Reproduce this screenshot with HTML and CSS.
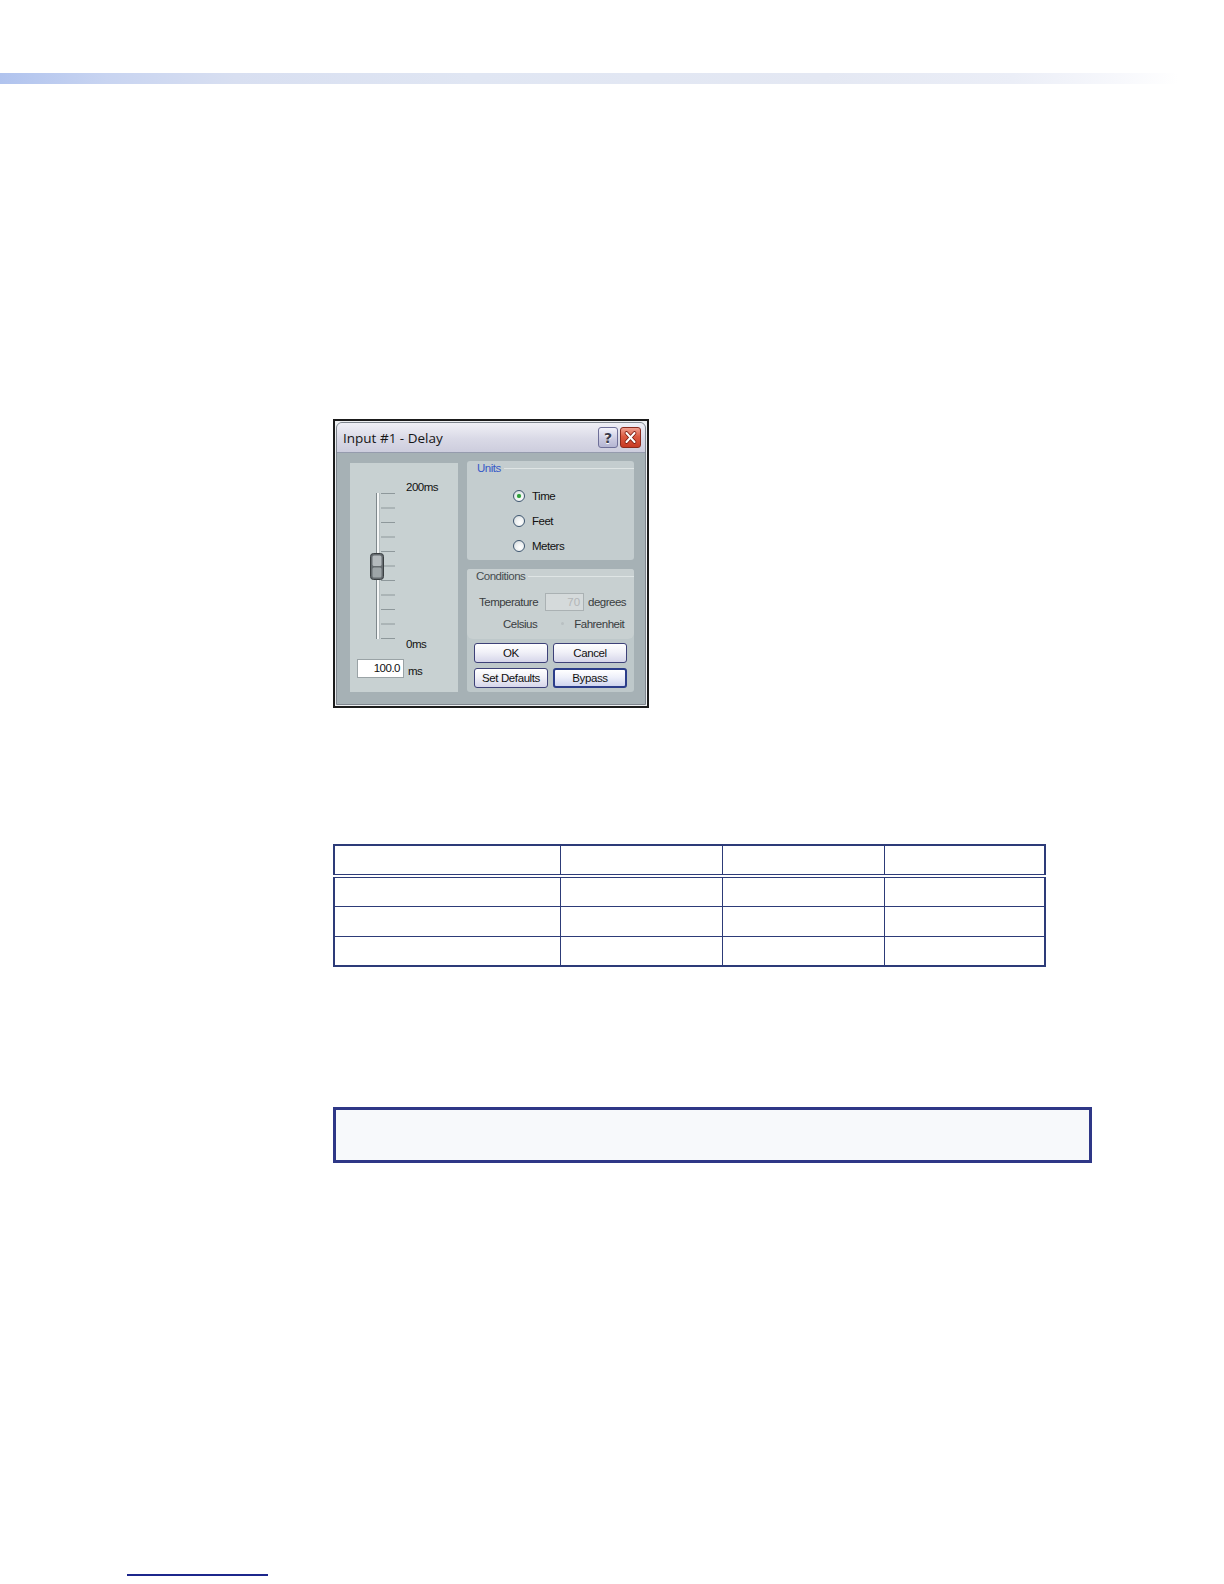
FILE: index.html
```html
<!DOCTYPE html>
<html lang="en">
<head>
<meta charset="utf-8">
<title>Input #1 - Delay</title>
<link rel="stylesheet" href="styles.css">
</head>
<body>
<div class="page">
  <div class="topbar"></div>

  <div class="figure">
    <div class="dialog">
      <div class="win">
        <div class="titlebar">
          <span class="title">Input #1 - Delay</span>
          <div class="tbtns">
            <span class="tb help">?</span>
            <span class="tb close">
              <svg width="21" height="21" viewBox="0 0 21 21" aria-hidden="true">
                <path d="M6 5.5 L15 15.5 M15 5.5 L6 15.5" stroke="#7a1c10" stroke-width="4" stroke-linecap="round"/>
                <path d="M6 5.5 L15 15.5 M15 5.5 L6 15.5" stroke="#ffffff" stroke-width="2.2" stroke-linecap="round"/>
              </svg>
            </span>
          </div>
        </div>

        <div class="body">
          <div class="lpanel">
            <div class="slbl">200ms</div>
            <svg class="slider" width="40" height="148" viewBox="0 0 40 148" aria-hidden="true">
              <g stroke="#8e989b" stroke-width="1">
                <line x1="17" y1="0.5" x2="31" y2="0.5"/>
                <line x1="17" y1="15" x2="31" y2="15"/>
                <line x1="17" y1="29.5" x2="31" y2="29.5"/>
                <line x1="17" y1="44" x2="31" y2="44"/>
                <line x1="17" y1="58.5" x2="31" y2="58.5"/>
                <line x1="17" y1="73" x2="31" y2="73"/>
                <line x1="17" y1="87.5" x2="31" y2="87.5"/>
                <line x1="17" y1="102" x2="31" y2="102"/>
                <line x1="17" y1="116.5" x2="31" y2="116.5"/>
                <line x1="17" y1="131" x2="31" y2="131"/>
                <line x1="17" y1="145.5" x2="31" y2="145.5"/>
              </g>
              <line x1="12.5" y1="0" x2="12.5" y2="146" stroke="#7f888c" stroke-width="1"/>
              <line x1="14" y1="0" x2="14" y2="146" stroke="#f4f6f6" stroke-width="2"/>
              <line x1="15.5" y1="0" x2="15.5" y2="146" stroke="#b6bec0" stroke-width="1"/>
              <rect x="6.5" y="60.5" width="13" height="26" rx="3" fill="#656b6f" stroke="#3a3f42"/>
              <rect x="8.5" y="62.5" width="9" height="10.5" rx="1.5" fill="#b4babd"/>
              <rect x="8.5" y="74.5" width="9" height="10" rx="1.5" fill="#9ea5a8"/>
            </svg>
            <div class="slbl zero">0ms</div>
            <div class="valrow">
              <span class="valbox">100.0</span>
              <span class="unit">ms</span>
            </div>
          </div>

          <div class="rcol">
            <div class="group units">
              <div class="ghead"><span class="glabel blue">Units</span></div>
              <div class="radios">
                <div class="rrow"><span class="radio on"></span><span class="rtxt">Time</span></div>
                <div class="rrow"><span class="radio"></span><span class="rtxt">Feet</span></div>
                <div class="rrow"><span class="radio"></span><span class="rtxt">Meters</span></div>
              </div>
            </div>

            <div class="condpanel">
              <div class="group cond">
                <div class="ghead"><span class="glabel">Conditions</span></div>
                <div class="temprow">
                  <span class="ctxt">Temperature</span>
                  <span class="tempbox">70</span>
                  <span class="ctxt">degrees</span>
                </div>
                <div class="scalerow">
                  <span class="ctxt celsius">Celsius</span>
                  <span class="fdot"></span>
                  <span class="ctxt fahr">Fahrenheit</span>
                </div>
              </div>
              <div class="btns">
                <span class="btn">OK</span>
                <span class="btn">Cancel</span>
                <span class="btn">Set Defaults</span>
                <span class="btn focus">Bypass</span>
              </div>
            </div>
          </div>
        </div>
      </div>
    </div>
  </div>

  <table class="grid">
    <colgroup>
      <col class="c1"><col class="c2"><col class="c3"><col class="c4">
    </colgroup>
    <thead>
      <tr><th></th><th></th><th></th><th></th></tr>
    </thead>
    <tbody>
      <tr><td></td><td></td><td></td><td></td></tr>
      <tr><td></td><td></td><td></td><td></td></tr>
      <tr><td></td><td></td><td></td><td></td></tr>
    </tbody>
  </table>

  <div class="note"></div>

  <div class="footline"></div>
</div>
</body>
</html>
```

FILE: styles.css
```css
* { box-sizing: border-box; }

html, body {
  margin: 0;
  padding: 0;
  background: #ffffff;
}

body {
  font-family: "Liberation Sans", Arial, sans-serif;
  color: #111;
}

.page {
  width: 1224px;
  height: 1584px;
  overflow: hidden;
  padding-top: 73px;
}

.topbar {
  width: 1178px;
  height: 11px;
  background: linear-gradient(90deg, #b0c3ee 0%, #c8d4f1 9%, #d8dff1 20%, #e0e6f3 40%, #e4e8f3 70%, #ebeef7 86%, #f7f8fc 95%, #ffffff 100%);
}

/* ---------- dialog ---------- */
.figure {
  margin: 335px 0 0 333px;
  width: 316px;
}

.dialog {
  width: 316px;
  height: 289px;
  border: 2px solid #1b1b1b;
  padding: 1px;
  background: #eef0f2;
  display: flex;
}

.win {
  flex: 1;
  display: flex;
  flex-direction: column;
  border: 1px solid #7f868e;
  border-radius: 6px 6px 0 0;
  background: #a6b1b5;
  overflow: hidden;
}

.titlebar {
  flex: none;
  height: 30px;
  display: flex;
  align-items: center;
  justify-content: space-between;
  padding: 0 4px 0 6px;
  background: linear-gradient(#f0f0f6, #d9d9e6 55%, #cdcddd);
  border-bottom: 1px solid #959bad;
}

.title {
  font-family: "Open Sans", "Noto Sans", sans-serif;
  font-size: 13.5px;
  color: #151515;
  line-height: 16px;
}

.tbtns {
  display: flex;
  gap: 2px;
}

.tb {
  width: 20px;
  height: 21px;
  border-radius: 3px;
  display: flex;
  align-items: center;
  justify-content: center;
}

.help {
  border: 1px solid #6e6f98;
  background: linear-gradient(#f2f2fa, #c9c9e0 60%, #b4b5d2);
  font-family: "DejaVu Sans", sans-serif;
  font-weight: bold;
  font-size: 14px;
  color: #3a3a4a;
  text-shadow: 0 1px 0 #ffffff;
}

.close {
  width: 21px;
  border: 1px solid #8c2a1c;
  background: linear-gradient(#f0a090, #dc5a40 45%, #c73a24);
}

.body {
  flex: 1;
  display: flex;
  gap: 9px;
  padding: 8px 11px 12px 13px;
}

/* left slider panel */
.lpanel {
  width: 108px;
  margin-top: 2px;
  background: #c8d1d2;
  padding-top: 19px;
  display: flex;
  flex-direction: column;
  font-size: 11.5px;
  letter-spacing: -0.5px;
  color: #111;
}

.slbl {
  height: 11px;
  line-height: 11px;
  margin-left: 56px;
}

.slider {
  display: block;
  margin-left: 14px;
}

.slbl.zero {
  margin-top: -2px;
}

.valrow {
  margin-top: 9px;
  margin-left: 7px;
  display: flex;
  align-items: center;
  gap: 4px;
}

.valbox {
  width: 47px;
  height: 19px;
  background: #ffffff;
  border: 1px solid #9aa3a6;
  text-align: right;
  padding-right: 3px;
  line-height: 17px;
}

.unit {
  margin-top: 4px;
}

/* right column */
.rcol {
  width: 167px;
  display: flex;
  flex-direction: column;
  gap: 9px;
}

.group {
  border-radius: 3px;
}

.ghead {
  height: 13px;
  display: flex;
  align-items: center;
  gap: 3px;
}

.ghead::after {
  content: "";
  flex: 1;
  border-top: 1px solid #dfe5e5;
}

.glabel {
  font-size: 11.5px;
  letter-spacing: -0.5px;
  line-height: 13px;
  color: #464d50;
}

.glabel.blue {
  color: #3659c8;
}

.units {
  height: 99px;
  background: #c4cdcf;
  padding: 1px 0 0 10px;
}

.radios {
  margin-top: 8px;
  margin-left: 36px;
}

.rrow {
  height: 25px;
  display: flex;
  align-items: center;
  gap: 7px;
}

.radio {
  width: 12px;
  height: 12px;
  border-radius: 50%;
  border: 1px solid #3e5670;
  background: radial-gradient(circle at 60% 65%, #ffffff 0%, #eef1f2 45%, #c9d0d3 100%);
  display: flex;
  align-items: center;
  justify-content: center;
}

.radio.on::after {
  content: "";
  width: 4px;
  height: 4px;
  border-radius: 50%;
  background: #2f9e3a;
  box-shadow: 0 0 1px #5fd06a;
}

.rtxt {
  font-size: 11.5px;
  letter-spacing: -0.5px;
  color: #111;
}

.condpanel {
  height: 123px;
  background: #bec8ca;
  border-radius: 3px;
  display: flex;
  flex-direction: column;
}

.cond {
  height: 70px;
  background: #c8d0d1;
  padding: 1px 0 0 9px;
  border-radius: 3px 3px 6px 6px;
}

.ctxt {
  font-size: 11.5px;
  letter-spacing: -0.5px;
  color: #3a3d3f;
}

.temprow {
  margin-top: 9px;
  margin-left: 3px;
  height: 19px;
  display: flex;
  align-items: center;
}

.tempbox {
  width: 39px;
  height: 18px;
  margin: 0 4px 0 7px;
  background: #d5dadb;
  border: 1px solid #aab1b3;
  color: #b3b6b8;
  font-size: 11.5px;
  text-align: right;
  padding-right: 3px;
  line-height: 16px;
}

.scalerow {
  margin-top: 6px;
  height: 13px;
  display: flex;
  align-items: center;
}

.celsius {
  margin-left: 27px;
}

.fdot {
  width: 3px;
  height: 3px;
  border-radius: 50%;
  background: #b9c0c2;
  margin-left: 24px;
}

.fahr {
  margin-left: 10px;
}

.btns {
  margin-top: 4px;
  padding: 0 7px;
  display: grid;
  grid-template-columns: 74px 74px;
  grid-auto-rows: 20px;
  gap: 5px;
}

.btn {
  display: flex;
  align-items: center;
  justify-content: center;
  border: 1px solid #3d4178;
  border-radius: 3px;
  background: linear-gradient(#ffffff, #f1f1f8 45%, #d6d6ea);
  font-size: 11.5px;
  letter-spacing: -0.4px;
  color: #111;
}

.btn.focus {
  border: 2px solid #2b3d8a;
  background: linear-gradient(#ffffff, #eef0fa 45%, #cfd5ef);
}

/* ---------- table ---------- */
.grid {
  margin: 136px 0 0 333px;
  width: 711px;
  border-collapse: collapse;
  table-layout: fixed;
  border: 2px solid #2d3b78;
}

.c1 { width: 226px; }
.c2 { width: 162px; }
.c3 { width: 162px; }
.c4 { width: 161px; }

.grid th,
.grid td {
  border: 1px solid #2d3b78;
  padding: 0;
}

.grid th {
  height: 31px;
  border-bottom: 4px double #2d3b78;
}

.grid td {
  height: 30px;
}

/* ---------- note ---------- */
.note {
  margin: 140px 0 0 333px;
  width: 759px;
  height: 56px;
  border: 3px solid #2e3787;
  background: #f7f9fb;
}

.footline {
  margin: 411px 0 0 127px;
  width: 141px;
  height: 2px;
  background: #1c268c;
}
```
